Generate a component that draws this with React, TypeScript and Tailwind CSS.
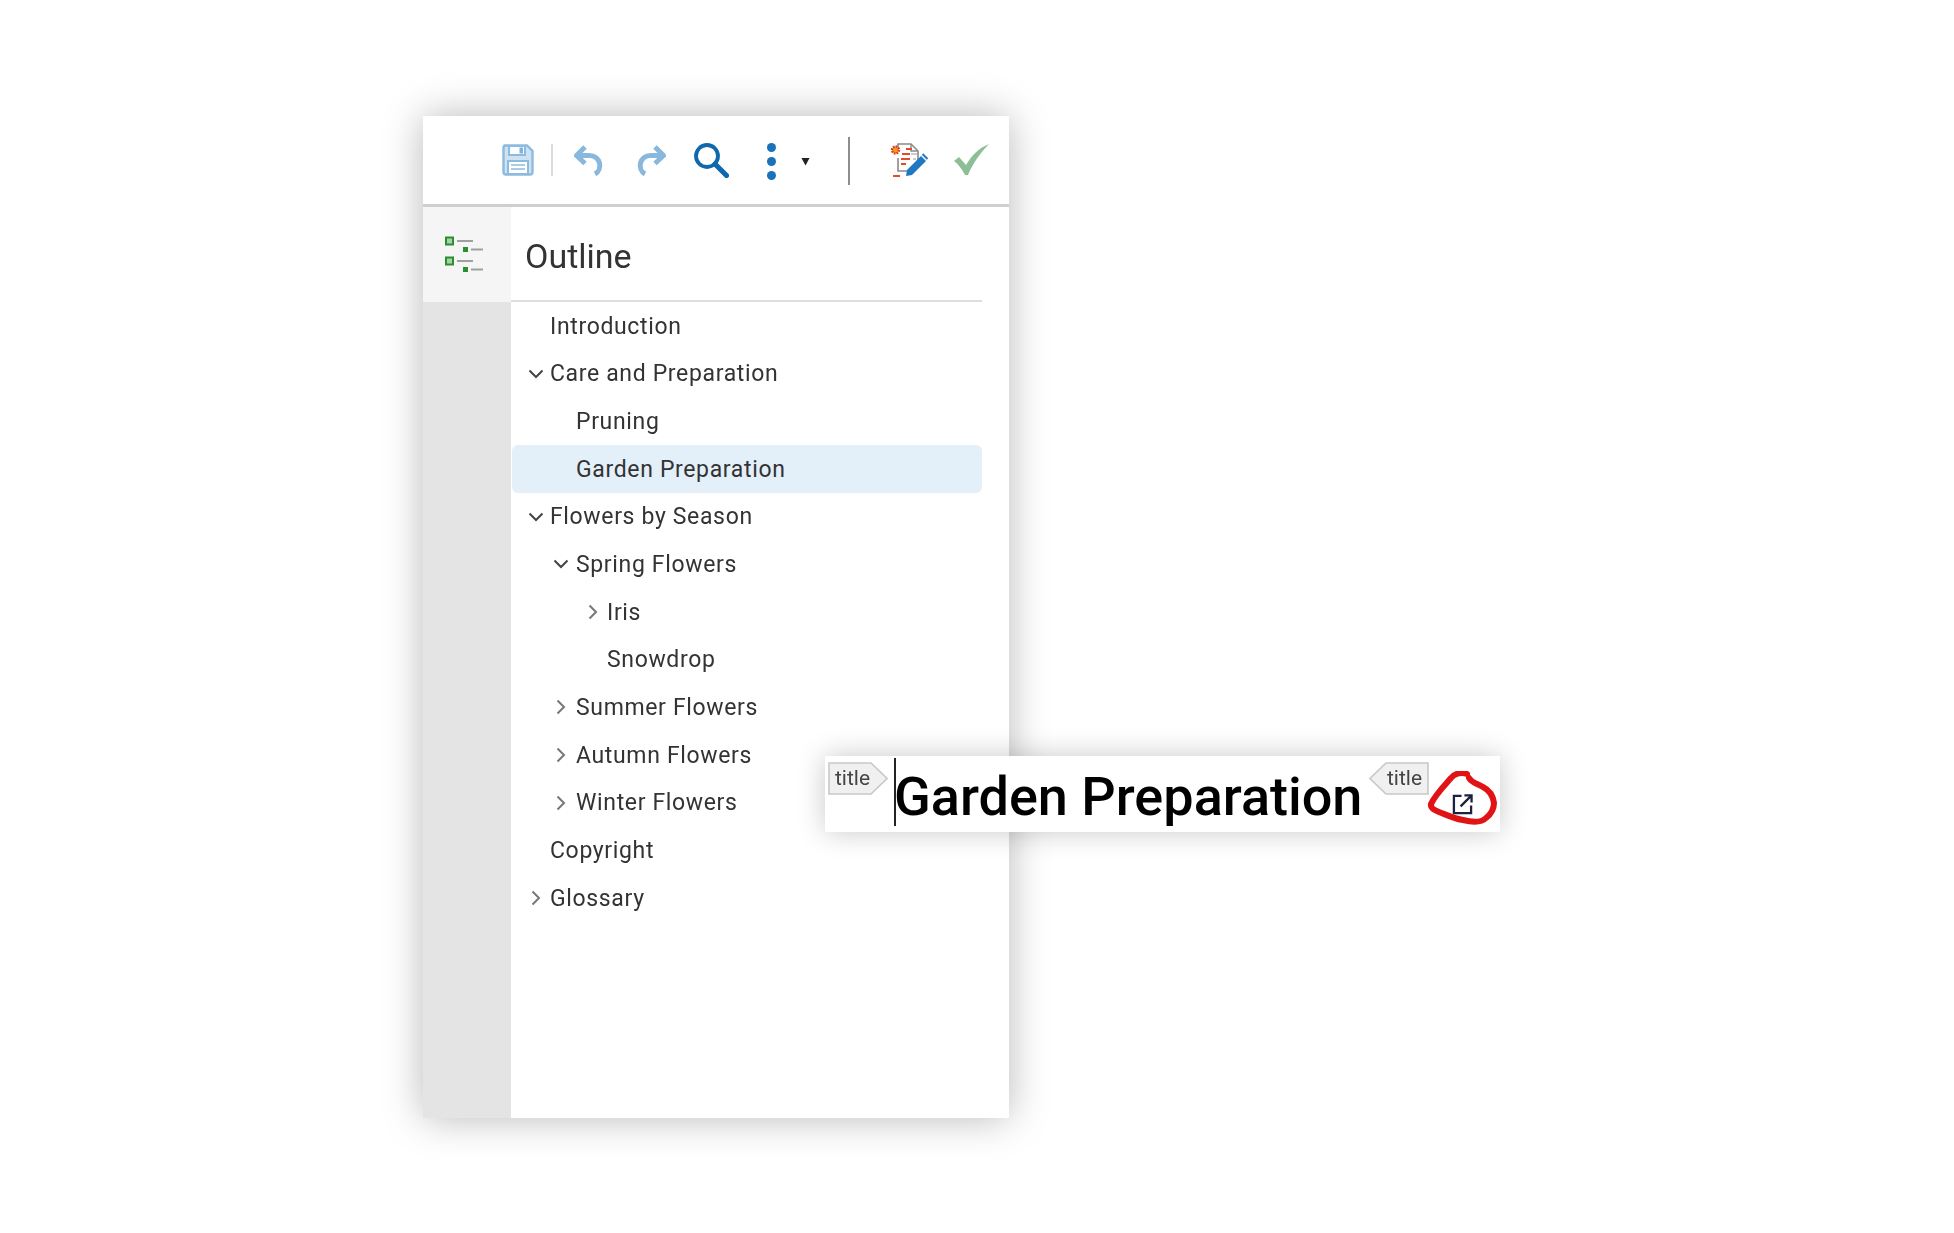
import React from "react";

const rows = [
  { t: "Introduction", pad: "pl-[127px]", c: "" , sel: false},
  { t: "Care and Preparation", pad: "pl-[127px]", c: "d0", sel: false },
  { t: "Pruning", pad: "pl-[153px]", c: "", sel: false },
  { t: "Garden Preparation", pad: "pl-[153px]", c: "", sel: true },
  { t: "Flowers by Season", pad: "pl-[127px]", c: "d0", sel: false },
  { t: "Spring Flowers", pad: "pl-[153px]", c: "d1", sel: false },
  { t: "Iris", pad: "pl-[184px]", c: "r2", sel: false },
  { t: "Snowdrop", pad: "pl-[184px]", c: "", sel: false },
  { t: "Summer Flowers", pad: "pl-[153px]", c: "r1", sel: false },
  { t: "Autumn Flowers", pad: "pl-[153px]", c: "r1", sel: false },
  { t: "Winter Flowers", pad: "pl-[153px]", c: "r1", sel: false },
  { t: "Copyright", pad: "pl-[127px]", c: "", sel: false },
  { t: "Glossary", pad: "pl-[127px]", c: "r0", sel: false },
];

function Chevron({ kind }: { kind: string }) {
  if (!kind) return null;
  const down = kind[0] === "d";
  const left = kind[1] === "0" ? "left-[105px]" : kind[1] === "1" ? "left-[130px]" : "left-[162px]";
  return (
    <svg viewBox="0 0 16 16" className={`absolute top-1/2 -translate-y-1/2 w-[16px] h-[16px] ${left}`} fill="none" stroke={down ? "#444" : "#777"} strokeWidth="2">
      {down ? <path d="M1.5 4.5 8 11l6.5-6.5" /> : <path d="M4.5 1.5 11 8l-6.5 6.5" />}
    </svg>
  );
}

function Tag({ right }: { right?: boolean }) {
  return (
    <div className="relative w-[60px] h-[33px] shrink-0">
      <svg viewBox="0 0 60 33" className="absolute inset-0 w-full h-full">
        <path d={right ? "M59 1H17L1 16.5 17 32H59Z" : "M1 1H43L59 16.5 43 32H1Z"} fill="#f0f0f0" stroke="#c8c8c8" strokeWidth="1.6" />
      </svg>
      <span className={`absolute top-[3px] text-[21px] leading-[26px] text-[#444] font-['Roboto',sans-serif] ${right ? "left-[18px]" : "left-[7px]"}`}>title</span>
    </div>
  );
}

export default function App() {
  return (
    <div className="relative h-[1233px] w-[1954px] bg-white overflow-hidden font-['Roboto',sans-serif]">
      <div className="pt-[116px] pl-[423px] blur-[0.6px]">
        <div className="w-[586px] h-[1002px] bg-white shadow-[0_0_38px_rgba(0,0,0,0.28)] flex flex-col">
          <div className="h-[91px] shrink-0 border-b-[3px] border-[#cfcfcf] relative flex items-center pl-[79px]">
            <svg viewBox="0 0 32 32" className="w-[32px] h-[32px]" fill="none">
              <path d="M2.5 1.5H25L30.5 7V28a2.5 2.5 0 0 1-2.5 2.5H4A2.5 2.5 0 0 1 1.500 28V3z" stroke="#8dbbe0" strokeWidth="2.4" fill="#cfe2f2" />
              <path d="M7 2h16v9H7z" fill="#fff" stroke="#8dbbe0" strokeWidth="2" />
              <path d="M17.500 3.500h3.500v6h-3.500z" fill="#7fb2dc" />
              <path d="M6 17h20v13H6z" fill="#fff" stroke="#8dbbe0" strokeWidth="2" />
              <path d="M9 21h14M9 25h14" stroke="#a8cbe6" strokeWidth="1.800" />
            </svg>
            <div className="w-[2px] h-[32px] bg-[#dcdcdc] ml-[17px]" />
            <svg viewBox="0 0 32 32" className="w-[32px] h-[36px] ml-[20px]" fill="none" stroke="#8ab8dd" strokeWidth="5">
              <path d="M12 3 3.500 11.500l8.500 8" strokeLinejoin="round" />
              <path d="M4 11.500h12c12 0 14 14 6 18.500" />
            </svg>
            <svg viewBox="0 0 32 32" className="w-[32px] h-[36px] ml-[30px]" fill="none" stroke="#8ab8dd" strokeWidth="5">
              <path d="M20 3l8.500 8.500-8.500 8" strokeLinejoin="round" />
              <path d="M28 11.500H16C4 11.500 2 25.500 10 30" />
            </svg>
            <svg viewBox="0 0 36 36" className="w-[36px] h-[36px] ml-[26px]" fill="none" stroke="#0f68ac">
              <circle cx="14" cy="14" r="11" strokeWidth="3.800" />
              <path d="M22 22l11.500 11.500" strokeWidth="5.200" strokeLinecap="round" />
            </svg>
            <div className="flex flex-col gap-[5px] ml-[38px] mt-[2px]">
              <div className="w-[9px] h-[9px] rounded-full bg-[#1a72b8]" />
              <div className="w-[9px] h-[9px] rounded-full bg-[#1a72b8]" />
              <div className="w-[9px] h-[9px] rounded-full bg-[#1a72b8]" />
            </div>
            <svg viewBox="0 0 10 10" className="w-[9px] h-[9px] ml-[25px] mt-[3px]">
              <path d="M0.500 1h9L5 9.500z" fill="#222" />
            </svg>
            <div className="w-[2px] h-[48px] bg-[#8e8e8e] ml-[38px] mt-[1px]" />
            <svg viewBox="0 0 40 38" className="w-[40px] h-[38px] ml-[39px]" fill="none">
              <path d="M9 10V3h13l7 7v12M9 17v13h10" stroke="#8a8a8a" strokeWidth="1.600" />
              <path d="M22 3v7h7" stroke="#8a8a8a" strokeWidth="1.400" />
              <circle cx="6.500" cy="9" r="3.500" fill="#f39a1e" stroke="#d9352a" strokeWidth="2.400" strokeDasharray="1.600 1.100" />
              <path d="M17 8h6M13 13h8M12 18h9M12 23h5M4 35h7" stroke="#e2492f" strokeWidth="1.800" />
              <path d="M22 13h6M24 18h3" stroke="#bbb" strokeWidth="1.400" />
              <path d="M17 35l1-6L32 15l5 5-14 14z" fill="#1f78c1" />
              <path d="M33.500 13l5 5" stroke="#1f78c1" strokeWidth="2" />
            </svg>
            <svg viewBox="0 0 36 32" className="w-[36px] h-[32px] ml-[25px]" fill="#8cbf95">
              <path d="M0 17l5-4 7 8C18 11 25 4 35 0 27 8 19 19 14 31h-3C8 25 4 20 0 17z" />
            </svg>
          </div>
          <div className="flex flex-1 min-h-0">
            <div className="w-[88px] shrink-0 bg-[#e4e4e4]">
              <div className="h-[95px] bg-[#f5f5f5] flex items-center justify-center pr-[4px]">
                <svg viewBox="0 0 40 38" className="w-[40px] h-[38px]" fill="none">
                  <rect x="1" y="1.500" width="7" height="7" fill="#a9d2a9" stroke="#2b8f2f" strokeWidth="2" />
                  <rect x="1" y="21.500" width="7" height="7" fill="#a9d2a9" stroke="#2b8f2f" strokeWidth="2" />
                  <rect x="18" y="11" width="5" height="5" fill="#2b8f2f" />
                  <rect x="18" y="31" width="5" height="5" fill="#2b8f2f" />
                  <path d="M12 5h16M26 13.500h12M12 25h16M26 33.500h12" stroke="#a0a0a0" strokeWidth="1.900" />
                </svg>
              </div>
            </div>
            <div className="flex-1 min-w-0 pr-[27px]">
              <div className="h-[95px] border-b-2 border-[#dedede] flex items-center pl-[14px]">
                <h1 className="text-[34px] leading-none text-[#333] pt-[5px]">Outline</h1>
              </div>
              <div className="relative -ml-[88px]">
                {rows.map((r) => (
                  <div key={r.t} className={`relative h-[47.7px] flex items-center pt-[2px] text-[23px] tracking-[0.65px] text-[#333] ${r.pad}`}>
                    {r.sel && <div className="absolute left-[89px] right-0 inset-y-0 bg-[#e3f0fa] rounded-md" />}
                    <Chevron kind={r.c} />
                    <span className="relative">{r.t}</span>
                  </div>
                ))}
              </div>
            </div>
          </div>
        </div>
      </div>

      <div className="absolute left-[825px] top-[756px] w-[675px] h-[76px] bg-white shadow-[0_0_28px_rgba(0,0,0,0.22)] flex items-start pl-[3px] pt-[6px] blur-[0.6px]">
        <Tag />
        <div className="w-[2px] h-[68px] bg-[#222] ml-[6px] -mt-[4px] shrink-0" />
        <div className="text-[54px] leading-[66px] font-medium text-black mt-[2px] -ml-[2px] whitespace-nowrap w-[475px]">Garden Preparation</div>
        <Tag right />
        <div className="relative w-[70px] h-[54px] mt-[9px] -ml-[2px] shrink-0">
          <svg viewBox="0 0 70 54" className="absolute inset-0 w-full h-full" fill="none">
            <path d="M40 3C35 1 28 2 24 7 17 15 8 24 4 33c-1 4 3 6 8 8 8 3 16 7 24 8 8 2 18 3 23-2 5-4 8-10 8-15-1-7-5-13-11-16-5-3-11-4-14-9" stroke="#e01414" strokeWidth="6" strokeLinecap="round" />
          </svg>
          <svg viewBox="0 0 22 22" className="absolute left-[25px] top-[23px] w-[21px] h-[21px]" fill="none" stroke="#1c2340" strokeWidth="2.400">
            <path d="M10 2H2v18h18v-8" />
            <path d="M9 13 20 2M13 1.500h7.500V9" />
          </svg>
        </div>
      </div>
    </div>
  );
}
